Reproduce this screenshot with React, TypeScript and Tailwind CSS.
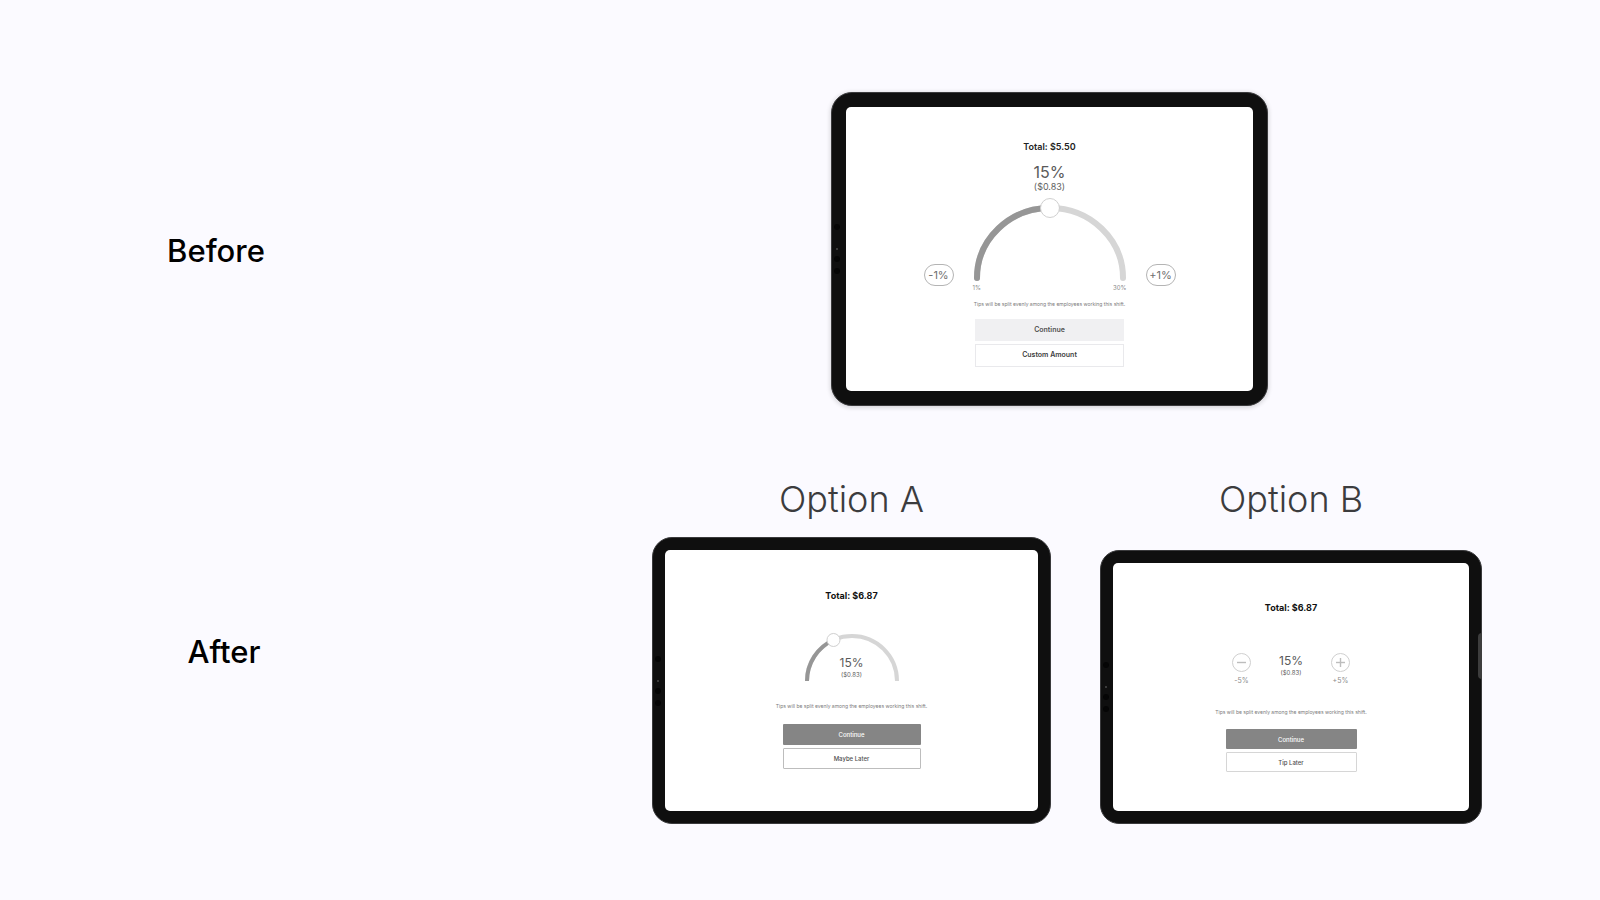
import type { ReactNode } from 'react';
import { clsx } from 'clsx';

const TIP_NOTE = 'Tips will be split evenly among the employees working this shift.';

type TabletProps = {
  className?: string;
  screenClassName?: string;
  pencil?: boolean;
  children: ReactNode;
};

const Tablet = ({ className, screenClassName, pencil, children }: TabletProps) => (
  <div className={clsx('relative border border-[#3a3a3c] bg-[#0f0f0f]', className)}>
    {/* Front camera and sensors */}
    <div className="absolute left-[2px] top-1/2 flex -translate-y-1/2 flex-col items-center gap-[6px]">
      <span className="mb-3 h-[6px] w-[6px] rounded-full bg-[#050505]" />
      <span className="h-[2px] w-[2px] rounded-full bg-[#4a4a4a]" />
      <span className="h-[6px] w-[6px] rounded-full bg-[#050505]" />
      <span className="h-[6px] w-[6px] rounded-full bg-[#050505]" />
    </div>
    {pencil && <span className="absolute right-[-1px] top-[82px] h-[46px] w-[4px] rounded-l-full bg-[#3d3d3d]" />}
    <div className={clsx('flex h-full flex-col items-center rounded-[5px] bg-white', screenClassName)}>{children}</div>
  </div>
);

type GaugeProps = {
  label: string;
  rx: number;
  ry: number;
  stroke: number;
  knob: number;
  fraction: number;
  round?: boolean;
  className?: string;
};

const Gauge = ({ label, rx, ry, stroke, knob, fraction, round, className }: GaugeProps) => {
  const cx = rx + 4;
  const cy = ry + knob + 1;
  const angle = Math.PI * (1 - fraction);
  const kx = cx + rx * Math.cos(angle);
  const ky = cy - ry * Math.sin(angle);
  const start = `M${cx - rx} ${cy}`;
  return (
    <div className={clsx('relative', className)}>
      <svg className="h-full w-full" viewBox={`0 0 ${cx * 2} ${cy + 3}`} fill="none" strokeLinecap={round ? 'round' : 'butt'} strokeWidth={stroke}>
        <path d={`${start}A${rx} ${ry} 0 0 1 ${cx + rx} ${cy}`} stroke="#d6d6d6" />
        <path d={`${start}A${rx} ${ry} 0 0 1 ${kx} ${ky}`} stroke="#969696" />
        <circle cx={kx} cy={ky} r={knob - 0.5} fill="#fff" stroke="#d0d0d0" strokeWidth={1} />
      </svg>
      <input
        type="range"
        aria-label={label}
        min={1}
        max={30}
        defaultValue={15}
        className="absolute inset-0 h-full w-full cursor-pointer opacity-0"
      />
    </div>
  );
};

const StepPill = ({ children }: { children: ReactNode }) => (
  <button className="mb-[6px] h-[22px] w-[30px] rounded-full border border-[#b4b4b4] text-[11px] leading-[20px] text-[#707070]">
    {children}
  </button>
);

const StepCircle = ({ label, plus }: { label: string; plus?: boolean }) => (
  <button className="flex w-5 flex-col items-center gap-1 text-[7px] leading-[10px] text-[#8c8c8c]">
    <svg className="h-[19px] w-[19px]" viewBox="0 0 19 19" fill="none" stroke="#cfcfcf">
      <circle cx="9.5" cy="9.5" r="9" />
      <path d="M5 9.5h9" stroke="#bdbdbd" strokeWidth="1.4" />
      {plus && <path d="M9.5 5v9" stroke="#bdbdbd" strokeWidth="1.4" />}
    </svg>
    {label}
  </button>
);

const App = () => {
  return (
    <main className="min-h-screen bg-[#fbfaff] pb-[75px] pt-[92px] font-['Inter',sans-serif]">
      {/* Before */}
      <section className="grid grid-cols-[27%_1fr] items-center">
        <h2 className="text-center text-[31px] font-medium leading-[40px] text-black">Before</h2>
        <div className="flex justify-end pb-1 pr-[332px]">
          <Tablet
            className="h-[314px] w-[437px] rounded-[21px] p-[14px] shadow-[0_1px_4px_1px_rgba(0,0,0,0.14)]"
            screenClassName="pt-[33px]"
          >
            <p className="text-[9px] font-semibold leading-[14px] text-[#222]">Total: $5.50</p>
            <p className="mt-[9px] text-[16px] leading-[18px] text-[#5a5a5a]">15%</p>
            <p className="text-[9px] leading-[12px] text-[#5f5f5f]">($0.83)</p>
            <div className="mt-[4px] flex items-end gap-[19px]">
              <StepPill>-1%</StepPill>
              <div>
                <Gauge label="Tip percentage" rx={73} ry={70} stroke={6} knob={10} fraction={0.5} round className="h-[84px] w-[154px]" />
                <div className="mt-[3px] flex justify-between text-[6px] leading-[8px] text-[#8a8a8a]">
                  <span>1%</span>
                  <span>30%</span>
                </div>
              </div>
              <StepPill>+1%</StepPill>
            </div>
            <p className="mt-2 text-[5px] leading-[8px] text-[#7a7a7a]">{TIP_NOTE}</p>
            <button className="mt-[11px] h-[22px] w-[149px] bg-[#f0f0f2] text-[7px] font-semibold text-[#505050]">
              Continue
            </button>
            <button className="mt-[3px] h-[23px] w-[149px] border border-[#e9e9ec] text-[7px] font-semibold text-[#404040]">
              Custom Amount
            </button>
          </Tablet>
        </div>
      </section>

      {/* After */}
      <section className="mt-[69px] grid grid-cols-[28%_1fr] items-center">
        <h2 className="text-center text-[31px] font-medium leading-[40px] text-black">After</h2>
        <div className="flex justify-end gap-[49px] pr-[118px]">
          <div className="flex flex-col items-center justify-between gap-[18px]">
            <h3 className="text-[36px] font-light leading-[40px] text-[#3c3c3e]">Option A</h3>
            <Tablet className="h-[287px] w-[399px] rounded-[20px] p-[12px]" screenClassName="pt-[39px]">
              <p className="text-[9px] font-bold leading-[14px] text-[#111]">Total: $6.87</p>
              <div className="relative mt-[25px]">
                <Gauge label="Option A tip percentage" rx={45} ry={45} stroke={4} knob={7} fraction={0.365} className="h-[56px] w-[98px]" />
                <div className="pointer-events-none absolute inset-x-0 top-[27px] text-center text-[#5a5a5a]">
                  <p className="text-[12px] leading-[16px]">15%</p>
                  <p className="text-[6px] leading-[8px]">($0.83)</p>
                </div>
              </div>
              <p className="mt-[18px] text-[5px] leading-[8px] text-[#7a7a7a]">{TIP_NOTE}</p>
              <button className="mt-[14px] h-[21px] w-[138px] rounded-[1px] bg-[#858585] text-[6px] font-medium text-white">
                Continue
              </button>
              <button className="mt-[3px] h-[21px] w-[138px] rounded-[1px] border border-[#bdbdbd] text-[6px] font-medium text-[#505050]">
                Maybe Later
              </button>
            </Tablet>
          </div>

          <div className="flex flex-col items-center justify-between gap-[18px]">
            <h3 className="text-[36px] font-light leading-[40px] text-[#3c3c3e]">Option B</h3>
            <Tablet className="h-[274px] w-[382px] rounded-[19px] p-[12px]" screenClassName="pt-[38px]" pencil>
              <p className="text-[9px] font-bold leading-[14px] text-[#111]">Total: $6.87</p>
              <div className="mt-[38px] flex w-[119px] justify-between">
                <StepCircle label="-5%" />
                <div className="text-center text-[#5a5a5a]">
                  <p className="text-[12px] leading-[16px]">15%</p>
                  <p className="text-[6px] leading-[8px]">($0.83)</p>
                </div>
                <StepCircle label="+5%" plus />
              </div>
              <p className="mt-[22px] text-[5px] leading-[8px] text-[#7a7a7a]">{TIP_NOTE}</p>
              <button className="mt-[13px] h-[20px] w-[131px] rounded-[1px] bg-[#858585] text-[6px] font-medium text-white">
                Continue
              </button>
              <button className="mt-[3px] h-[20px] w-[131px] rounded-[1px] border border-[#d6d6d6] text-[6px] font-medium text-[#505050]">
                Tip Later
              </button>
            </Tablet>
          </div>
        </div>
      </section>
    </main>
  );
};

export default App;
